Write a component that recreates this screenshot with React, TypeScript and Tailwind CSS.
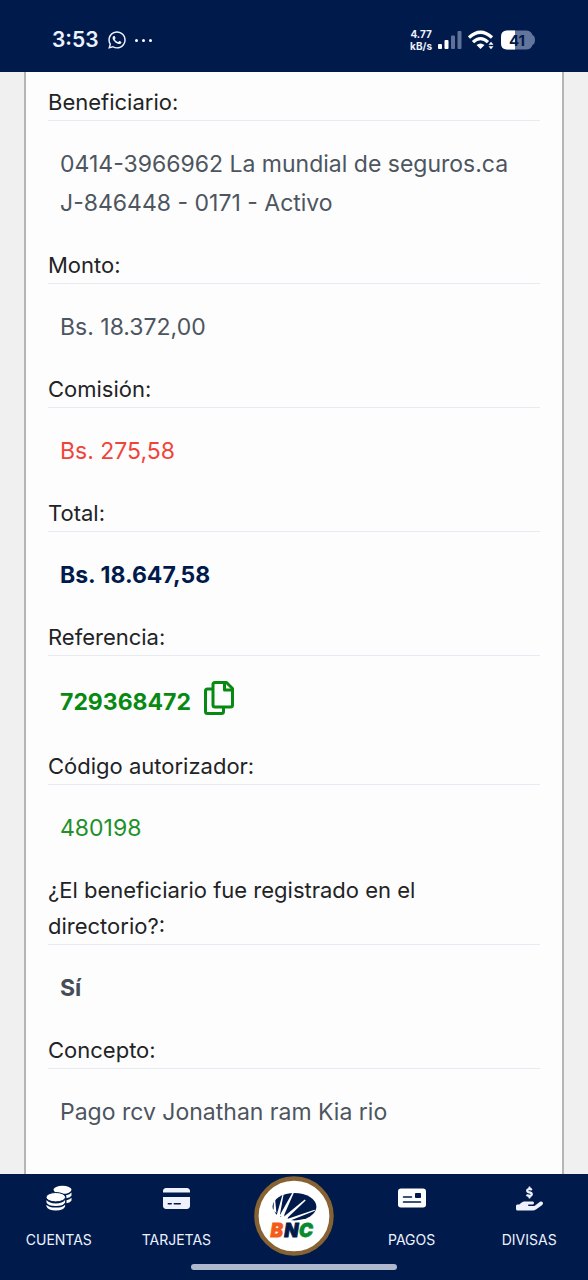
import type { ReactNode } from "react";
import { FaCreditCard, FaHandHoldingDollar, FaWhatsapp } from "react-icons/fa6";

function CopyIcon() {
  return (
    <svg viewBox="0 0 32 36" className="h-9 w-8" fill="none" stroke="currentColor" strokeWidth="3" strokeLinejoin="round">
      <path d="M10 9H4.500Q2.500 9 2.500 11V31.500Q2.500 33.500 4.500 33.500H18.500Q20.500 33.500 20.500 31.500V27.500" />
      <path d="M12 2.500H23.500L29.500 8.500V25Q29.500 27 27.500 27H12Q10 27 10 25V4.500Q10 2.500 12 2.500Z" />
      <path d="M21.500 2.500V10H29.500" />
    </svg>
  );
}

function CoinsIcon() {
  return (
    <svg viewBox="0 0 26 26" className="size-[26px]" fill="#fff">
      <ellipse cx="16.500" cy="4.800" rx="9" ry="4" />
      <path d="M20 10.200Q24 9.500 25.500 7.500V10.500Q24.500 12.500 20.500 13.200Q20.500 11.500 20 10.200Z" />
      <path d="M20.500 15.200Q24 14.500 25.500 12.800V15.500Q24.500 17.500 20.500 18.200Z" />
      <ellipse cx="9.800" cy="12.200" rx="9.800" ry="4.700" stroke="#001b4b" strokeWidth="1" />
      <path d="M.5 15Q3 18.400 9.800 18.400T19.100 15V17.500Q17.500 21 9.800 21T.5 17.500Z" />
      <path d="M.5 19.700Q3 22.600 9.800 22.600T19.100 19.700V21.500Q17.500 25.500 9.800 25.500T.5 21.500Z" />
    </svg>
  );
}

function CheckIcon() {
  return (
    <svg viewBox="0 0 28 20" className="h-5 w-7">
      <rect width="28" height="19" y=".5" rx="3" fill="#fff" />
      <path d="M5.500 9h8M5.500 14h17" stroke="#001b4b" strokeWidth="1.600" strokeLinecap="round" />
      <rect x="17" y="5" width="6" height="5" rx=".8" fill="#001b4b" />
    </svg>
  );
}

function SignalIcon() {
  return (
    <svg viewBox="0 0 24 20" className="h-5 w-6" fill="#fff">
      <rect x="0" y="14" width="4" height="5" rx="1" />
      <rect x="6.500" y="10" width="4" height="9" rx="1" />
      <g fill="#5f7197">
        <rect x="13" y="5.500" width="4" height="13.500" rx="1" />
        <rect x="19.500" y="1" width="4" height="18" rx="1" />
      </g>
    </svg>
  );
}

function WifiIcon() {
  return (
    <svg viewBox="0 0 26 20" className="h-5 w-6.5">
      <g fill="none" stroke="#fff" strokeWidth="3.200">
        <path d="M1 7.500Q12.500 -3 24 7.500" />
        <path d="M5 12.200Q12.500 5 20 12.200" />
      </g>
      <path d="M8.500 15Q12.500 12 16.500 15L12.500 19Z" fill="#fff" />
      <path d="M20.500 14.800L23 11.800L25.500 14.800ZM20.500 16.200L23 19.200L25.500 16.200Z" fill="#fff" />
    </svg>
  );
}

function BatteryIcon() {
  return (
    <svg viewBox="0 0 36 20" className="h-5 w-9" role="img" aria-label="41">
      <path d="M7 .5H26Q31 .5 32.500 5Q35 6 35 10Q35 14 32.500 15Q31 19.500 26 19.500H7Q1 19.500 1 13V7Q1 .5 7 .5Z" fill="#64759b" />
      <path d="M7 .5H15V19.500H7Q1 19.500 1 13V7Q1 .5 7 .5Z" fill="#fff" />
      <text x="17" y="15.500" textAnchor="middle" fontFamily="Inter, sans-serif" fontSize="15" fontWeight="700" fill="#001b4b">41</text>
    </svg>
  );
}

function BankLogo() {
  return (
    <svg viewBox="0 0 82 82" className="size-20" role="img" aria-label="BNC">
      <circle cx="41" cy="41" r="38.500" fill="#fff" stroke="#876334" strokeWidth="4.500" />
      <ellipse cx="41.500" cy="31.500" rx="22.500" ry="14" fill="#001b4b" />
      <g fill="#fff">
        <path d="M17 35L20 34L23 41L26 37L27 42L31 39L31 43L35 42L34 46L37 48H17Z" />
        <path d="M20 36L20.500 23L21.500 22.500L23 38Z" />
        <path d="M23 41L29.500 18L30.500 18L26.500 40Z" />
        <path d="M26 41L39.500 17L41 17L30 42Z" />
        <path d="M29 43L52 24L53 25L32 45Z" />
        <path d="M31 45L62 34.500L62.500 35.500L34 47Z" />
      </g>
      <g fontFamily="Inter, sans-serif" fontSize="19" fontWeight="900" fontStyle="italic">
        <text x="17" y="63" fill="#f35b19" stroke="#f35b19" strokeWidth=".8">B</text>
        <text x="31" y="63" fill="#001b4b" stroke="#001b4b" strokeWidth=".8">N</text>
        <text x="46" y="63" fill="#078b2c" stroke="#078b2c" strokeWidth=".8">C</text>
      </g>
    </svg>
  );
}

function Field({ label, className, children }: { label: ReactNode; className: string; children: ReactNode }) {
  return (
    <div className="pb-6">
      <dt className="border-b border-[#e7e9f3] text-[22px] leading-9 text-[#222325]">{label}</dt>
      <dd className={`px-3 pt-6 text-[23px] leading-[39px] ${className}`}>{children}</dd>
    </div>
  );
}

function NavItem({ label, children }: { label: string; children: ReactNode }) {
  return (
    <a href="#" className="flex flex-col items-center gap-4 pt-2.5 text-sm leading-6">
      <span className="flex h-7 items-center text-[27px]">{children}</span>
      {label}
    </a>
  );
}

export default function App() {
  return (
    <div className="flex min-h-screen flex-col bg-[#f0f0f0] font-['Inter',sans-serif]">
      <header className="flex h-18 items-center justify-between bg-[#001b4b] pt-2 pr-13 pl-13 text-[#eef2ff]">
        <div className="flex items-center gap-2">
          <time className="text-[21px] leading-7 font-semibold">3:53</time>
          <FaWhatsapp className="size-5" />
          <span className="flex gap-1">
            <i className="size-[3px] rounded-full bg-white" />
            <i className="size-[3px] rounded-full bg-white" />
            <i className="size-[3px] rounded-full bg-white" />
          </span>
        </div>
        <div className="flex items-center gap-1.5">
          <div className="text-center text-[10px] leading-3 font-bold">
            <div>4.77</div>
            <div>kB/s</div>
          </div>
          <SignalIcon />
          <WifiIcon />
          <BatteryIcon />
        </div>
      </header>

      <main className="mx-6 flex-1 border-x-2 border-[#b5b5b7] bg-[#fdfdfe] px-[22px] pt-3">
        <dl>
          <Field label="Beneficiario:" className="text-[#4d555e]">
            0414-3966962 La mundial de seguros.ca
            <br />
            J-846448 - 0171 - Activo
          </Field>
          <Field label="Monto:" className="text-[#4d555e]">Bs. 18.372,00</Field>
          <Field label="Comisión:" className="text-[#f0443b]">Bs. 275,58</Field>
          <Field label="Total:" className="font-bold text-[#001b4b]">Bs. 18.647,58</Field>
          <Field label="Referencia:" className="font-bold text-[#078a12]">
            <span className="flex h-11 items-center gap-3">
              729368472
              <button type="button" aria-label="Copiar referencia" className="-mt-2">
                <CopyIcon />
              </button>
            </span>
          </Field>
          <Field label="Código autorizador:" className="text-[#219029]">480198</Field>
          <Field
            label={
              <>
                ¿El beneficiario fue registrado en el
                <br />
                directorio?:
              </>
            }
            className="font-bold text-[#454d56]"
          >
            Sí
          </Field>
          <Field label="Concepto:" className="text-[#4d555e]">Pago rcv Jonathan ram Kia rio</Field>
        </dl>
      </main>

      <footer className="h-[106px] bg-[#001b4b] text-[#eef2ff]">
        <nav className="grid h-[90px] grid-cols-5">
          <NavItem label="CUENTAS"><CoinsIcon /></NavItem>
          <NavItem label="TARJETAS"><FaCreditCard /></NavItem>
          <a href="#" className="flex justify-center pt-0.5">
            <BankLogo />
          </a>
          <NavItem label="PAGOS"><CheckIcon /></NavItem>
          <NavItem label="DIVISAS"><FaHandHoldingDollar /></NavItem>
        </nav>
        <div className="mx-auto h-1.5 w-[206px] rounded-full bg-[#b0b8ce]" />
      </footer>
    </div>
  );
}
